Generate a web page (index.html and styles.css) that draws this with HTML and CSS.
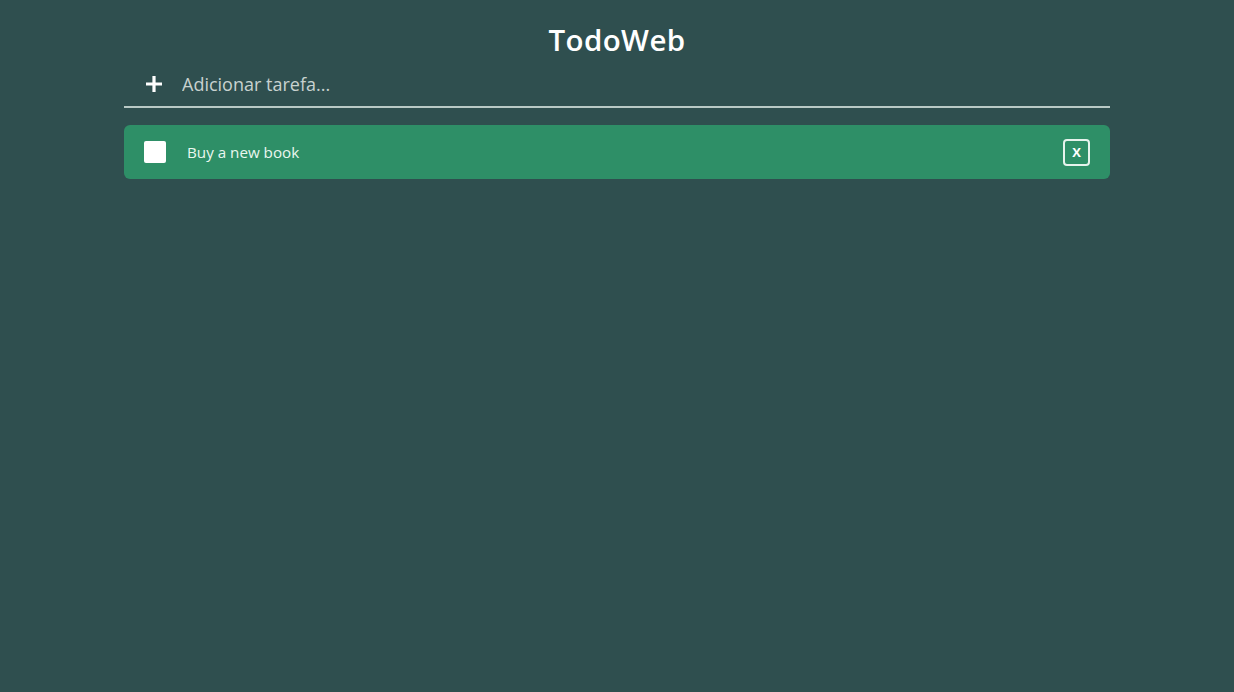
FILE: index.html
```html
<!DOCTYPE html>
<html lang="pt">
<head>
<meta charset="utf-8">
<title>TodoWeb</title>
<link rel="stylesheet" href="styles.css">
</head>
<body>
<main class="app">
  <h1 class="title">TodoWeb</h1>
  <form class="add-form">
    <span class="plus" aria-hidden="true">
      <svg width="18" height="18" viewBox="0 0 18 18"><path d="M9 1v16M1 9h16" stroke="#fff" stroke-width="3.2" fill="none"/></svg>
    </span>
    <input class="add-input" type="text" placeholder="Adicionar tarefa...">
  </form>
  <ul class="list">
    <li class="item">
      <span class="check"></span>
      <span class="item-text">Buy a new book</span>
      <button class="delete" type="button">X</button>
    </li>
  </ul>
</main>
</body>
</html>
```
FILE: styles.css
```css
* { box-sizing: border-box; }
html, body { margin: 0; padding: 0; }
body {
  background: #2f4f4f;
  font-family: "Open Sans", "Liberation Sans", sans-serif;
  color: #fff;
  min-height: 692px;
}
.app {
  width: 986px;
  margin: 0 auto;
  display: flex;
  flex-direction: column;
}
.title {
  margin: 22px 0 0;
  text-align: center;
  font-size: 29.5px;
  font-weight: 600;
  line-height: 36px;
  letter-spacing: 0.4px;
}
.add-form {
  display: flex;
  align-items: center;
  height: 50px;
  padding: 3px 0 0 21px;
  border-bottom: 2px solid #b9c9c5;
}
.plus { display: flex; width: 18px; height: 18px; margin-right: 19px; }
.add-input {
  flex: 1;
  background: transparent;
  border: none;
  outline: none;
  font-family: inherit;
  font-size: 18px;
  color: #fff;
  padding: 0;
}
.add-input::placeholder { color: #c8d2cf; }
.list { list-style: none; margin: 17px 0 0; padding: 0; }
.item {
  display: flex;
  align-items: center;
  height: 54px;
  padding: 0 20px;
  background: #2e8f67;
  border-radius: 6px;
}
.check {
  width: 22px;
  height: 22px;
  background: #fff;
  border-radius: 2px;
  flex: none;
}
.item-text {
  flex: 1;
  margin-left: 21px;
  font-size: 15.2px;
  color: #eaf7ef;
}
.delete {
  width: 27px;
  height: 27px;
  border: 2px solid #e6f3ec;
  border-radius: 4px;
  background: transparent;
  color: #fff;
  font-family: inherit;
  font-weight: 700;
  font-size: 13px;
  padding: 0;
  display: flex;
  align-items: center;
  justify-content: center;
}
```
